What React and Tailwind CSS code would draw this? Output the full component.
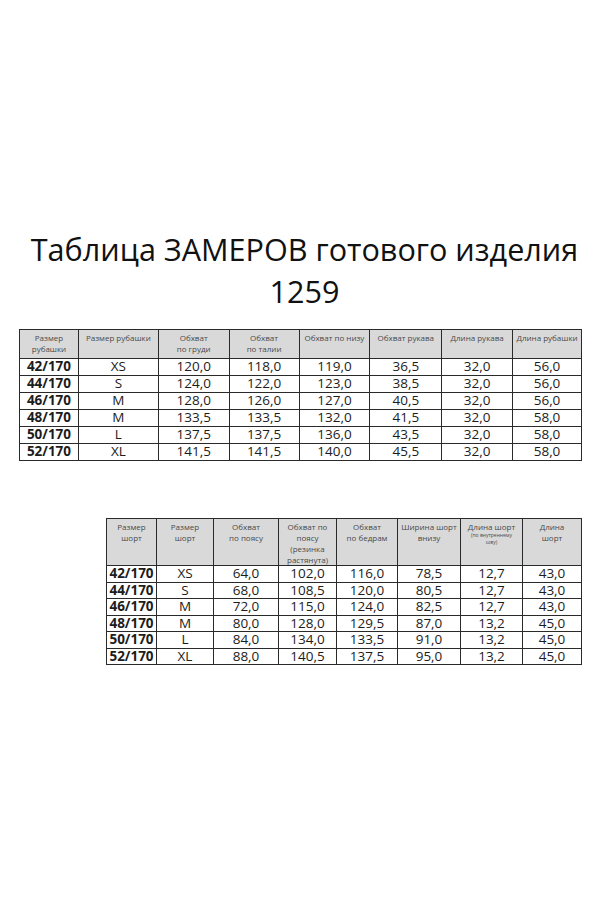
import React from 'react';

const shirtHead = [
  ['Размер', 'рубашки'],
  ['Размер рубашки'],
  ['Обхват', 'по груди'],
  ['Обхват', 'по талии'],
  ['Обхват по низу'],
  ['Обхват рукава'],
  ['Длина рукава'],
  ['Длина рубашки'],
];
const shirtCols = [59, 80, 71, 70, 71, 72, 71, 69];
const shirtRows = [
  ['42/170', 'XS', '120,0', '118,0', '119,0', '36,5', '32,0', '56,0'],
  ['44/170', 'S', '124,0', '122,0', '123,0', '38,5', '32,0', '56,0'],
  ['46/170', 'M', '128,0', '126,0', '127,0', '40,5', '32,0', '56,0'],
  ['48/170', 'M', '133,5', '133,5', '132,0', '41,5', '32,0', '58,0'],
  ['50/170', 'L', '137,5', '137,5', '136,0', '43,5', '32,0', '58,0'],
  ['52/170', 'XL', '141,5', '141,5', '140,0', '45,5', '32,0', '58,0'],
];

const shortsCols = [50, 57, 65, 58, 61, 63, 62, 59];
const shortsRows = [
  ['42/170', 'XS', '64,0', '102,0', '116,0', '78,5', '12,7', '43,0'],
  ['44/170', 'S', '68,0', '108,5', '120,0', '80,5', '12,7', '43,0'],
  ['46/170', 'M', '72,0', '115,0', '124,0', '82,5', '12,7', '43,0'],
  ['48/170', 'M', '80,0', '128,0', '129,5', '87,0', '13,2', '45,0'],
  ['50/170', 'L', '84,0', '134,0', '133,5', '91,0', '13,2', '45,0'],
  ['52/170', 'XL', '88,0', '140,5', '137,5', '95,0', '13,2', '45,0'],
];

function Lines({ lines }) {
  return lines.map((l, i) => <div key={i}>{l}</div>);
}

function DataRows({ rows, h }) {
  return rows.map((r) => (
    <tr key={r[0]} className={h}>
      {r.map((c, i) => (
        <td
          key={i}
          className={
            'border border-[#2a2a2a] p-0 text-center align-middle text-[13.5px] leading-none text-[#1c1c1c] ' +
            (i === 0 ? 'font-bold' : '')
          }
        >
          {c}
        </td>
      ))}
    </tr>
  ));
}

export default function App() {
  return (
    <div className="min-h-[899px] w-[599px] bg-white" style={{ fontFamily: '"Open Sans", "Liberation Sans", sans-serif' }}>
      <div className="pt-[228px] pl-[10px] text-center text-[30.6px] leading-[42px] text-[#111]">
        <div>Таблица ЗАМЕРОВ готового изделия</div>
        <div>1259</div>
      </div>

      <div className="ml-[19px] mt-[17px] w-[563px]">
        <table className="table-fixed border-collapse">
          <colgroup>
            {shirtCols.map((w, i) => (
              <col key={i} style={{ width: w }} />
            ))}
          </colgroup>
          <thead>
            <tr className="h-[29px]">
              {shirtHead.map((lines, i) => (
                <th
                  key={i}
                  className="border border-[#2a2a2a] bg-[#d9d9d9] px-0 pt-[2px] text-center align-top text-[8px] font-normal leading-[11px] text-[#4a4a4a]"
                >
                  <Lines lines={lines} />
                </th>
              ))}
            </tr>
          </thead>
          <tbody>
            <DataRows rows={shirtRows} h="h-[17px]" />
          </tbody>
        </table>

        <div className="mt-[57px] flex justify-end">
          <table className="table-fixed border-collapse">
            <colgroup>
              {shortsCols.map((w, i) => (
                <col key={i} style={{ width: w }} />
              ))}
            </colgroup>
            <thead>
              <tr className="h-[47px]">
                {[
                  ['Размер', 'шорт'],
                  ['Размер', 'шорт'],
                  ['Обхват', 'по поясу'],
                  ['Обхват по', 'поясу', '(резинка', 'растянута)'],
                  ['Обхват', 'по бедрам'],
                  ['Ширина шорт', 'внизу'],
                ].map((lines, i) => (
                  <th
                    key={i}
                    className="border border-[#2a2a2a] bg-[#d9d9d9] px-0 pt-[2px] text-center align-top text-[8px] font-normal leading-[11px] text-[#4a4a4a]"
                  >
                    <Lines lines={lines} />
                  </th>
                ))}
                <th className="border border-[#2a2a2a] bg-[#d9d9d9] px-0 pt-[2px] text-center align-top font-normal text-[#4a4a4a]">
                  <div className="text-[8px] leading-[11px]">Длина шорт</div>
                  <div className="text-[5px] leading-[7px]">(по внутреннему</div>
                  <div className="text-[5px] leading-[7px]">шву)</div>
                </th>
                <th className="border border-[#2a2a2a] bg-[#d9d9d9] px-0 pt-[2px] text-center align-top text-[8px] font-normal leading-[11px] text-[#4a4a4a]">
                  <Lines lines={['Длина', 'шорт']} />
                </th>
              </tr>
            </thead>
            <tbody>
              <DataRows rows={shortsRows} h="h-[16.5px]" />
            </tbody>
          </table>
        </div>
      </div>
    </div>
  );
}
